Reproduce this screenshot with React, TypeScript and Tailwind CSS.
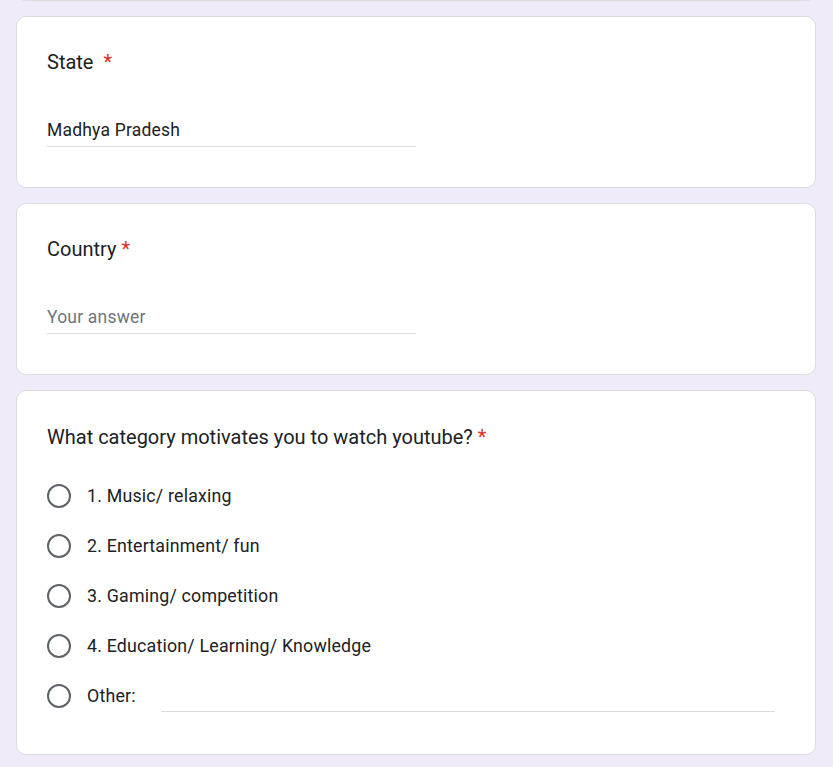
import React from "react";

const options = [
  "1. Music/ relaxing",
  "2. Entertainment/ fun",
  "3. Gaming/ competition",
  "4. Education/ Learning/ Knowledge",
];

function Card({ children, className = "" }: { children: React.ReactNode; className?: string }) {
  return (
    <div
      className={`w-[800px] ml-4 bg-white border border-[#dadce0] rounded-[10px] px-[30px] ${className}`}
    >
      {children}
    </div>
  );
}

function Title({ text, doubleSpace }: { text: string; doubleSpace?: boolean }) {
  return (
    <div className="text-[20px] leading-[30px] text-[#202124]">
      {text}
      {doubleSpace ? "\u00a0\u00a0" : " "}
      <span className="text-[#d93025]">*</span>
    </div>
  );
}

function Radio() {
  return <div className="w-6 h-6 rounded-full border-2 border-[#5f6368] shrink-0" />;
}

export default function App() {
  return (
    <div
      className="min-h-screen bg-[#f0ebf8] pb-4"
      style={{ fontFamily: "Roboto, 'Noto Sans', sans-serif" }}
    >
      <div className="w-[800px] ml-4 h-[10px] -mt-[9px] bg-white border border-[#dadce0] rounded-b-[10px]" />

      <Card className="mt-[15px] pt-[30px] h-[172px]">
        <Title text="State" doubleSpace />
        <div className="mt-[35px] w-[369px] h-[35px] pt-[3px] border-b border-[#dadce0] flex items-center text-[17.5px] text-[#202124] tracking-[0.2px]">
          Madhya Pradesh
        </div>
      </Card>

      <Card className="mt-[15px] pt-[30px] h-[172px]">
        <Title text="Country" />
        <div className="mt-[35px] w-[369px] h-[35px] pt-[3px] border-b border-[#dadce0] flex items-center text-[17.5px] text-[#70757a] tracking-[0.2px]">
          Your answer
        </div>
      </Card>

      <Card className="mt-[15px] pt-[31px] pb-[33px]">
        <Title text="What category motivates you to watch youtube?" />
        <div className="mt-[19px] flex flex-col">
          {options.map((o) => (
            <div key={o} className="h-[50px] flex items-center gap-4">
              <Radio />
              <span className="text-[17.8px] text-[#202124] tracking-[0.2px]">{o}</span>
            </div>
          ))}
          <div className="h-[50px] flex items-center gap-4">
            <Radio />
            <span className="text-[17.8px] text-[#202124] tracking-[0.2px]">Other:</span>
            <div className="ml-[9px] flex-1 mr-[10px] self-start mt-[40px] border-b border-[#dadce0]" />
          </div>
        </div>
      </Card>
    </div>
  );
}
